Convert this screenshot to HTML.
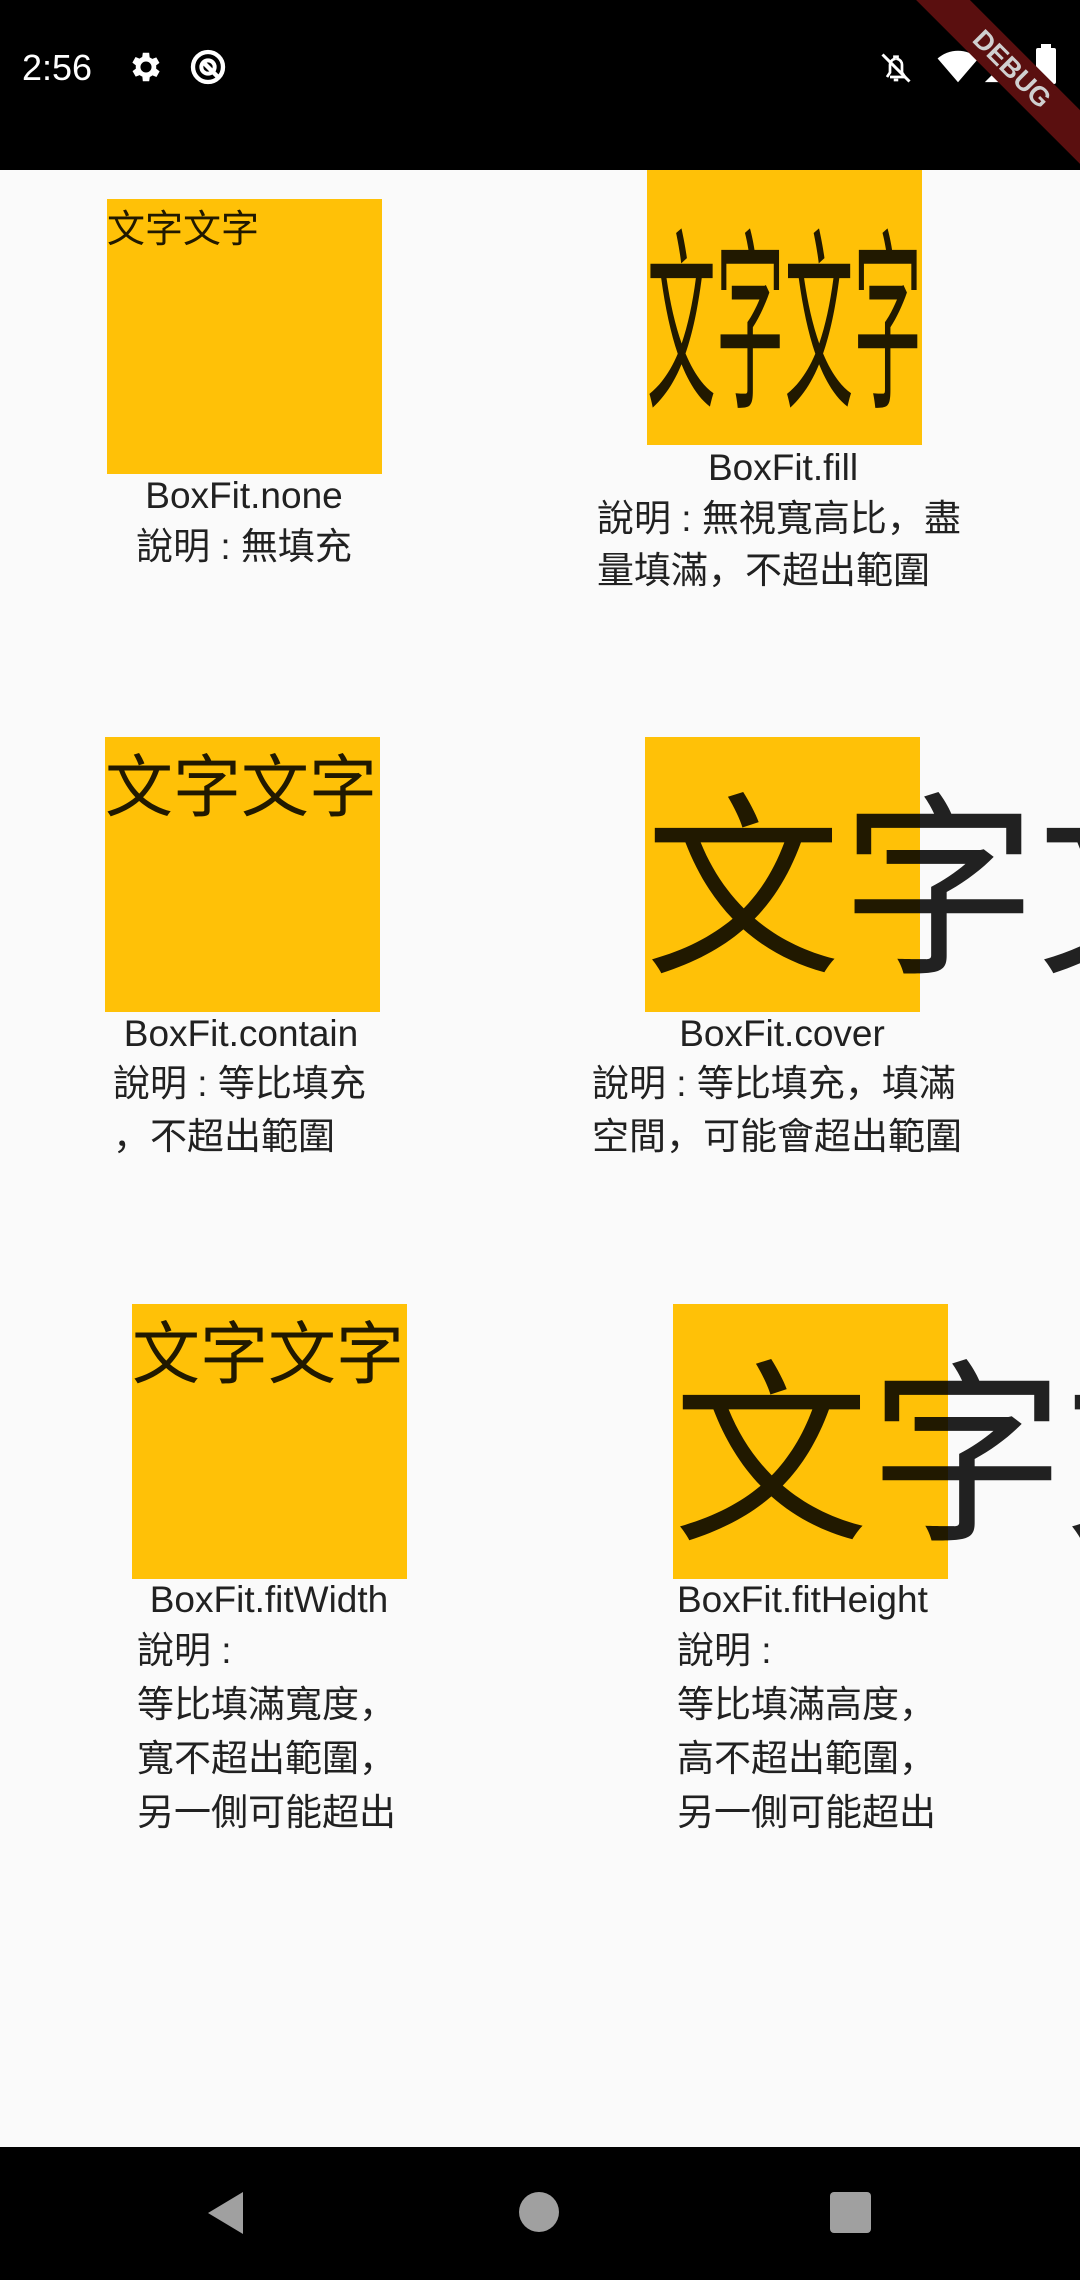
<!DOCTYPE html>
<html><head><meta charset="utf-8"><style>
*{margin:0;padding:0;box-sizing:border-box}
html,body{width:1080px;height:2280px;overflow:hidden}
body{background:#fafafa;position:relative;font-family:"Liberation Sans","Noto Sans CJK SC",sans-serif;color:#212121}
#w{position:absolute;left:0;top:0;width:1080px;height:2280px;overflow:hidden}
.a{position:absolute;white-space:nowrap}
.box{position:absolute;background:#ffc107;width:275px;height:275px}
.t{font-size:37px;line-height:52px;position:absolute;white-space:nowrap}
.c{transform:translateX(-50%)}
.big{position:absolute;white-space:nowrap;line-height:1;color:rgba(0,0,0,0.87);font-family:"Noto Sans CJK SC",sans-serif}
</style></head><body><div id="w">
<div class="a" style="left:0;top:0;width:1080px;height:170px;background:#000"></div>
<div class="a" style="left:22px;top:44px;color:#fff;font-size:36px;line-height:48px">2:56</div>
<svg class="a" style="left:127px;top:48px" width="38" height="38" viewBox="0 0 24 24"><path fill="#fff" d="M19.4 13a7.5 7.5 0 000-2l2.1-1.6-2-3.5-2.5 1a7 7 0 00-1.7-1L15 3h-4l-.4 2.7a7 7 0 00-1.700 1l-2.5-1-2 3.5L6.6 11a7.5 7.5 0 000 2l-2.1 1.6 2 3.5 2.5-1a7 7 0 001.7 1L11 21h4l.4-2.7a7 7 0 001.7-1l2.5 1 2-3.5zM13 15.5A3.5 3.5 0 1113 8.5a3.5 3.5 0 010 7z" transform="translate(-1 0)"/></svg>
<svg class="a" style="left:188px;top:47px" width="40" height="40" viewBox="0 0 24 24"><circle cx="12" cy="12" r="9" fill="none" stroke="#fff" stroke-width="2.6"/><circle cx="12" cy="12" r="4" fill="none" stroke="#fff" stroke-width="2.4"/><path d="M10 10l9 9" stroke="#fff" stroke-width="2.6"/></svg>
<svg class="a" style="left:878px;top:50px" width="36" height="36" viewBox="0 0 24 24"><path d="M8 18h10l-2-3v-5a4 4 0 00-3-4V4.5h-2V6a4 4 0 00-3 4v5l-2 3" fill="none" stroke="#fff" stroke-width="1.8"/><path d="M10.5 20h3" stroke="#fff" stroke-width="1.8"/><path d="M3 3l18 18" stroke="#fff" stroke-width="2"/></svg>
<svg class="a" style="left:937px;top:50px" width="42" height="34" viewBox="0 0 24 20"><path d="M12 19L0 5a18 18 0 0124 0z" fill="#fff"/></svg>
<svg class="a" style="left:982px;top:51px" width="34" height="34" viewBox="0 0 24 24"><path d="M2 22L22 2v20z" fill="#fff"/><path d="M13 12v8h5v-8z" fill="#000"/></svg>
<div class="a" style="left:1036px;top:48px;width:20px;height:36px;background:#fff;border-radius:2px"></div>
<div class="a" style="left:1041px;top:44px;width:10px;height:5px;background:#fff"></div>
<div class="a" style="left:862px;top:50px;width:300px;height:38px;background:#5a0f0f;transform:rotate(45deg);transform-origin:center;color:#d0d0d0;font-weight:bold;font-size:27px;line-height:38px;text-align:center">DEBUG</div>

<div class="box" style="left:107px;top:199px"></div>
<div class="big" style="left:107px;top:204px;font-size:38px;line-height:44px">文字文字</div>
<div class="t c" style="left:244px;top:470px">BoxFit.none</div>
<div class="t c" style="left:244px;top:521px">說明 : 無填充</div>

<div class="box" style="left:647px;top:170px;overflow:hidden"><div class="big" style="left:0;top:44px;font-size:38px;line-height:38px;transform-origin:0 0;transform:scale(1.81,5.1)">文字文字</div></div>
<div class="t c" style="left:783px;top:442px">BoxFit.fill</div>
<div class="t" style="left:597px;top:493px">說明 : 無視寬高比，盡</div>
<div class="t" style="left:597px;top:545px">量填滿，不超出範圍</div>

<div class="box" style="left:105px;top:737px"></div>
<div class="big" style="left:105px;top:748px;font-size:68px">文字文字</div>
<div class="t c" style="left:241px;top:1008px">BoxFit.contain</div>
<div class="t" style="left:113px;top:1058px">說明 : 等比填充</div>
<div class="t" style="left:113px;top:1111px">，不超出範圍</div>

<div class="box" style="left:645px;top:737px"></div>
<div class="big" style="left:645px;top:776px;font-size:196px">文字文</div>
<div class="t c" style="left:782px;top:1008px">BoxFit.cover</div>
<div class="t" style="left:592px;top:1058px">說明 : 等比填充，填滿</div>
<div class="t" style="left:592px;top:1111px">空間，可能會超出範圍</div>

<div class="box" style="left:132px;top:1304px"></div>
<div class="big" style="left:132px;top:1315px;font-size:68px">文字文字</div>
<div class="t c" style="left:269px;top:1574px">BoxFit.fitWidth</div>
<div class="t" style="left:137px;top:1625px">說明 :</div>
<div class="t" style="left:137px;top:1679px">等比填滿寬度，</div>
<div class="t" style="left:137px;top:1733px">寬不超出範圍，</div>
<div class="t" style="left:137px;top:1787px">另一側可能超出</div>

<div class="box" style="left:673px;top:1304px"></div>
<div class="big" style="left:673px;top:1343px;font-size:196px">文字文</div>
<div class="t" style="left:677px;top:1574px">BoxFit.fitHeight</div>
<div class="t" style="left:677px;top:1625px">說明 :</div>
<div class="t" style="left:677px;top:1679px">等比填滿高度，</div>
<div class="t" style="left:677px;top:1733px">高不超出範圍，</div>
<div class="t" style="left:677px;top:1787px">另一側可能超出</div>

<div class="a" style="left:0;top:2147px;width:1080px;height:133px;background:#000"></div>
<svg class="a" style="left:205px;top:2190px" width="42" height="46" viewBox="0 0 42 46"><path d="M38 2v42L3 23z" fill="#a0a0a0"/></svg>
<div class="a" style="left:519px;top:2192px;width:40px;height:40px;border-radius:50%;background:#a0a0a0"></div>
<div class="a" style="left:830px;top:2192px;width:41px;height:41px;border-radius:4px;background:#a0a0a0"></div>
</div></body></html>
